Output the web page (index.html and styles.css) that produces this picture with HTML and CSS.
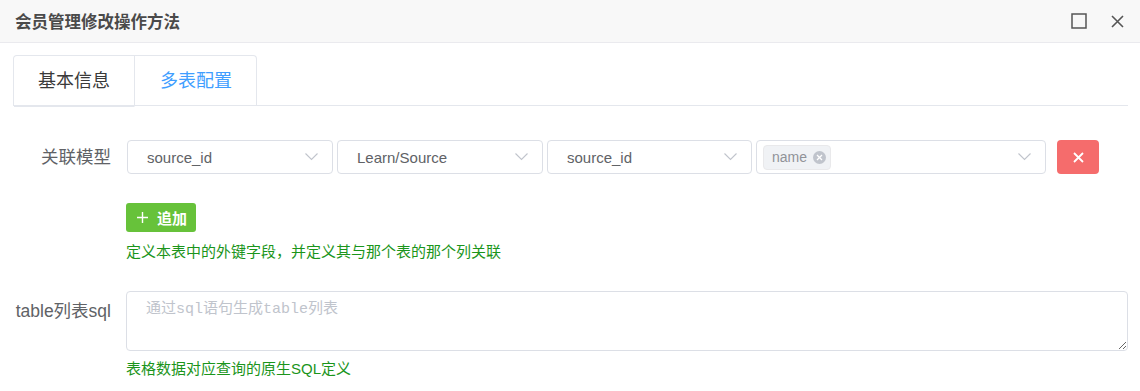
FILE: index.html
```html
<!DOCTYPE html>
<html lang="zh-CN">
<head>
    <meta charset="UTF-8">
    <meta name="viewport" content="width=device-width, initial-scale=1.0">
    <title>会员管理修改操作方法</title>
    <link rel="stylesheet" href="styles.css">
</head>
<body>
    <div class="dialog">
        <div class="dialog-title">
            <span class="title-text">会员管理修改操作方法</span>
            <div class="title-actions">
                <svg class="icon-max" width="16" height="16" viewBox="0 0 16 16">
                    <rect x="1" y="1" width="14" height="14" fill="none" stroke="#555" stroke-width="1.5"/>
                </svg>
                <svg class="icon-close" width="13" height="13" viewBox="0 0 13 13">
                    <path d="M1 1 L12 12 M12 1 L1 12" stroke="#555" stroke-width="1.6" fill="none"/>
                </svg>
            </div>
        </div>

        <div class="dialog-body">
            <div class="tabs-header">
                <div class="tabs-nav">
                    <div class="tab-item">基本信息</div>
                    <div class="tab-item is-active">多表配置</div>
                </div>
            </div>

            <div class="form">
                <div class="form-row">
                    <label class="form-label">关联模型</label>
                    <div class="form-content">
                        <div class="relation-row">
                            <div class="select w-206">
                                <span class="select-value">source_id</span>
                                <svg class="chevron" width="13" height="8" viewBox="0 0 13 8"><path d="M0.5 0.5 L6.5 6.5 L12.5 0.5" fill="none" stroke="#c0c4cc" stroke-width="1.1"/></svg>
                            </div>
                            <div class="select w-206">
                                <span class="select-value">Learn/Source</span>
                                <svg class="chevron" width="13" height="8" viewBox="0 0 13 8"><path d="M0.5 0.5 L6.5 6.5 L12.5 0.5" fill="none" stroke="#c0c4cc" stroke-width="1.1"/></svg>
                            </div>
                            <div class="select w-205">
                                <span class="select-value">source_id</span>
                                <svg class="chevron" width="13" height="8" viewBox="0 0 13 8"><path d="M0.5 0.5 L6.5 6.5 L12.5 0.5" fill="none" stroke="#c0c4cc" stroke-width="1.1"/></svg>
                            </div>
                            <div class="select select-multi w-290">
                                <span class="tag">name
                                    <span class="tag-close">
                                        <svg width="7" height="7" viewBox="0 0 7 7"><path d="M1 1 L6 6 M6 1 L1 6" stroke="#fff" stroke-width="1.3"/></svg>
                                    </span>
                                </span>
                                <svg class="chevron" width="13" height="8" viewBox="0 0 13 8"><path d="M0.5 0.5 L6.5 6.5 L12.5 0.5" fill="none" stroke="#c0c4cc" stroke-width="1.1"/></svg>
                            </div>
                            <button class="btn-danger" type="button">
                                <svg width="11" height="11" viewBox="0 0 11 11"><path d="M1 1 L10 10 M10 1 L1 10" stroke="#fff" stroke-width="1.8"/></svg>
                            </button>
                        </div>
                        <button class="btn-success" type="button">
                            <svg width="11" height="11" viewBox="0 0 11 11"><path d="M5.5 0 V11 M0 5.5 H11" stroke="#fff" stroke-width="1.4"/></svg>
                            <span>追加</span>
                        </button>
                        <div class="help-text">定义本表中的外键字段，并定义其与那个表的那个列关联</div>
                    </div>
                </div>

                <div class="form-row row-sql">
                    <label class="form-label">table列表sql</label>
                    <div class="form-content">
                        <textarea class="textarea" placeholder="通过sql语句生成table列表"></textarea>
                        <div class="help-text help-sql">表格数据对应查询的原生SQL定义</div>
                    </div>
                </div>
            </div>
        </div>
    </div>
</body>
</html>
```

FILE: styles.css
```css
body {
    margin: 0;
    font-family: "Liberation Sans", "Noto Sans CJK SC", sans-serif;
    color: #606266;
    background: #fff;
}
.dialog {
    width: 1140px;
    height: 391px;
    overflow: hidden;
}
.dialog-title {
    display: flex;
    align-items: center;
    justify-content: space-between;
    height: 42px;
    padding: 0 15px;
    background: #f8f8f8;
    border-bottom: 1px solid #eaeaee;
}
.title-text {
    font-size: 16.5px;
    font-weight: bold;
    color: #4a4a4a;
}
.title-actions {
    display: flex;
    align-items: center;
    gap: 24px;
    padding-right: 1px;
}
.title-actions svg {
    display: block;
}
.dialog-body {
    padding: 12px 12px 0 13px;
}
.tabs-header {
    border-bottom: 1px solid #e4e7ed;
    height: 50px;
}
.tabs-nav {
    display: inline-flex;
    border: 1px solid #e4e7ed;
    border-bottom: none;
    border-radius: 4px 4px 0 0;
    height: 50px;
}
.tab-item {
    padding: 0 24px;
    height: 50px;
    line-height: 50px;
    font-size: 18px;
    color: #3a3a3a;
    border-bottom: 1px solid #e4e7ed;
}
.tab-item + .tab-item {
    border-left: 1px solid #e4e7ed;
}
.tab-item.is-active {
    color: #409eff;
    border-bottom-color: #fff;
    padding: 0 24px 0 25px;
}
.form {
    padding-top: 34px;
}
.form-row {
    display: flex;
}
.form-label {
    width: 98px;
    flex-shrink: 0;
    padding-right: 15px;
    text-align: right;
    font-size: 17.5px;
    line-height: 34px;
    color: #606266;
}
.form-content {
    flex: 1;
}
.relation-row {
    display: flex;
    align-items: center;
    gap: 4px;
    padding-left: 1px;
}
.select {
    box-sizing: border-box;
    display: flex;
    align-items: center;
    justify-content: space-between;
    height: 34px;
    padding: 0 14px 0 19px;
    border: 1px solid #dcdfe6;
    border-radius: 4px;
    font-size: 15px;
    color: #606266;
}
.w-206 { width: 206px; }
.w-205 { width: 205px; }
.w-290 { width: 290px; }
.select-multi {
    padding-left: 6px;
}
.chevron {
    display: block;
}
.tag {
    box-sizing: border-box;
    display: inline-flex;
    align-items: center;
    gap: 6px;
    height: 25px;
    padding: 0 4px 0 8px;
    background: #f0f2f5;
    border: 1px solid #e9e9eb;
    border-radius: 4px;
    font-size: 14px;
    color: #909399;
}
.tag-close {
    display: flex;
    align-items: center;
    justify-content: center;
    width: 13px;
    height: 13px;
    border-radius: 50%;
    background: #c0c4cc;
}
.tag-close svg {
    display: block;
}
.btn-danger {
    display: flex;
    align-items: center;
    justify-content: center;
    width: 42px;
    height: 34px;
    margin-left: 7px;
    padding: 0;
    border: none;
    border-radius: 4px;
    background: #f56c6c;
}
.btn-success {
    display: flex;
    align-items: center;
    gap: 9px;
    height: 29px;
    margin-top: 29px;
    padding: 0 9px 0 11px;
    border: none;
    border-radius: 3px;
    background: #67c23a;
    color: #fff;
    font-family: "Liberation Sans", "Noto Sans CJK SC", sans-serif;
    font-size: 15px;
    font-weight: bold;
}
.help-text {
    margin-top: 10px;
    font-size: 15px;
    line-height: 20px;
    color: #1b951b;
}
.row-sql {
    margin-top: 29px;
}
.row-sql .form-label {
    padding-top: 3px;
}
.textarea {
    box-sizing: border-box;
    display: block;
    width: 1002px;
    height: 60px;
    margin: 0;
    padding: 7px 19px;
    border: 1px solid #dcdfe6;
    border-radius: 4px;
    font-family: "Liberation Mono", "Noto Sans CJK SC", monospace;
    font-size: 15px;
    line-height: 22px;
    color: #606266;
    outline: none;
}
.textarea::placeholder {
    color: #c0c4cc;
}
.help-sql {
    margin-top: 8px;
}
```
